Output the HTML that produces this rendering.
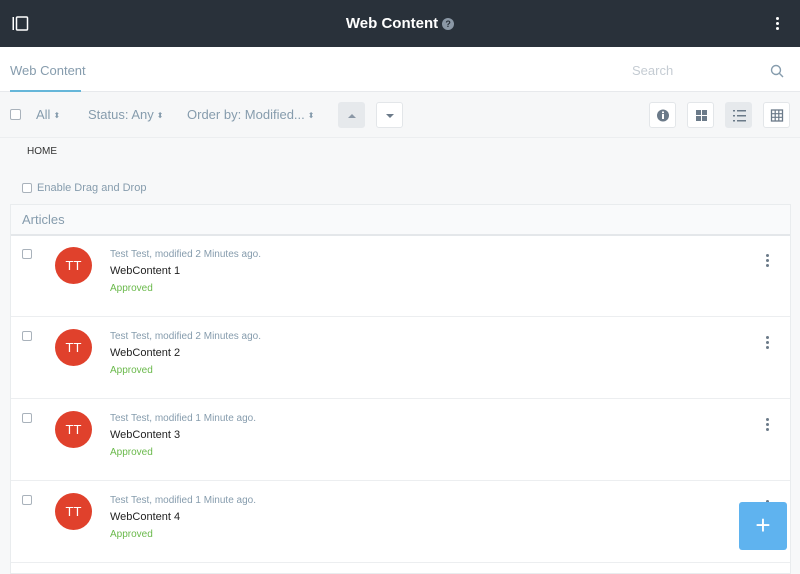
<!DOCTYPE html>
<html><head><style>
*{box-sizing:border-box;margin:0;padding:0}
body{width:800px;height:562px;overflow:hidden;background:#f7f8f9;font-family:"Liberation Sans",sans-serif;position:relative}
.top{position:absolute;left:0;top:0;width:800px;height:47px;background:#29313a}
.title{position:absolute;left:0;width:800px;top:15px;text-align:center;color:#fff;font-weight:bold;font-size:15px}
.q{display:inline-block;width:12px;height:12px;border-radius:50%;background:#8b98a6;color:#29313a;font-size:9px;line-height:12px;vertical-align:1px;margin-left:4px}
.nav{position:absolute;left:0;top:47px;width:800px;height:45px;background:#fff;border-bottom:1px solid #e7e9ec}
.tab{position:absolute;left:10px;top:16px;font-size:13px;color:#869cad}
.tabl{position:absolute;left:10px;top:43px;width:71px;height:2px;background:#65b6d9}
.srch{position:absolute;left:632px;top:16px;font-size:13px;color:#c5ccd3}
.mgmt{position:absolute;left:0;top:92px;width:800px;height:46px;background:#f6f7f8;border-bottom:1px solid #eceef0}
.cb{position:absolute;width:11px;height:11px;border:1px solid #a9b2bb;border-radius:2px;background:#fff}
.t{position:absolute;font-size:13px;color:#869cad}
.arr{font-size:8px;vertical-align:1px;margin-left:3px}
.btn{position:absolute;top:102px;width:27px;height:26px;border:1px solid #e3e6e9;border-radius:3px;background:#fff}
.panel{position:absolute;left:10px;top:204px;width:781px;height:370px;background:#fff;border:1px solid #e9ecee}
.hdr{height:31px;border-bottom:2px solid #e4e7ea;background:#f9fafb;font-size:13px;color:#869cad;padding:7px 11px}
.row{position:absolute;left:0;width:779px;height:82px;border-bottom:1px solid #eceef0}
.av{position:absolute;left:44px;top:12px;width:37px;height:37px;border-radius:50%;background:#e0412c;color:#fff;font-size:13px;text-align:center;line-height:37px}
.meta{position:absolute;left:99px;top:14px;font-size:10px;color:#869cad}
.nm{position:absolute;left:99px;top:30px;font-size:11px;color:#222}
.ap{position:absolute;left:99px;top:48px;font-size:10px;color:#6ab94b}
.kb{position:absolute;left:755px;top:19px;width:3px}
.kb i{display:block;width:3px;height:3px;border-radius:50%;background:#6b7a89;margin-bottom:2px}
.row .cb{left:11px;top:14px;width:10px;height:10px}
</style></head><body>
<div class="top">
<svg style="position:absolute;left:12px;top:16px" width="17" height="15"><rect x="0.5" y="1" width="1.5" height="13" fill="#fff"/><rect x="4.5" y="1" width="11" height="13" rx="1" fill="none" stroke="#fff" stroke-width="1.5"/></svg>
<div class="title">Web Content<span class="q">?</span></div>
<div style="position:absolute;left:776px;top:17px;width:3px"><i style="display:block;width:3px;height:3px;background:#fff;border-radius:50%;margin-bottom:2px"></i><i style="display:block;width:3px;height:3px;background:#fff;border-radius:50%;margin-bottom:2px"></i><i style="display:block;width:3px;height:3px;background:#fff;border-radius:50%"></i></div>
</div>
<div class="nav"><div class="tab">Web Content</div><div class="tabl"></div><div class="srch">Search</div>
<svg style="position:absolute;left:770px;top:17px" width="14" height="14"><circle cx="6" cy="6" r="4.5" fill="none" stroke="#869cad" stroke-width="1.4"/><line x1="9.3" y1="9.3" x2="13" y2="13" stroke="#869cad" stroke-width="1.4"/></svg></div>
<div class="mgmt">
<div class="cb" style="left:10px;top:17px"></div>
<div class="t" style="left:36px;top:15px">All<span class="arr">⬍</span></div>
<div class="t" style="left:88px;top:15px">Status: Any<span class="arr">⬍</span></div>
<div class="t" style="left:187px;top:15px">Order by: Modified...<span class="arr">⬍</span></div>
</div>
<div class="btn" style="left:338px;background:#e6e9ec;border-color:#e6e9ec"><svg width="27" height="26"><path d="M9 15 L13 11 L17 15Z" fill="#8b98a6"/></svg></div>
<div class="btn" style="left:376px"><svg width="27" height="26"><path d="M9 11 L13 15 L17 11Z" fill="#6b7a89"/></svg></div>
<div class="btn" style="left:649px"><svg width="27" height="26"><circle cx="13" cy="12.5" r="6" fill="#6b7a89"/><rect x="12" y="11" width="2" height="5" fill="#fff"/><rect x="12" y="8.5" width="2" height="1.6" fill="#fff"/></svg></div>
<div class="btn" style="left:687px"><svg width="27" height="26"><rect x="8" y="7" width="5" height="5" fill="#6b7a89"/><rect x="14" y="7" width="5" height="5" fill="#6b7a89"/><rect x="8" y="13" width="5" height="5" fill="#6b7a89"/><rect x="14" y="13" width="5" height="5" fill="#6b7a89"/></svg></div>
<div class="btn" style="left:725px;background:#e6e9ec;border-color:#e6e9ec"><svg width="27" height="26" fill="#6b7a89"><rect x="7" y="7" width="2" height="1.5"/><rect x="11" y="7" width="9" height="1.5"/><rect x="7" y="12" width="2" height="1.5"/><rect x="11" y="12" width="9" height="1.5"/><rect x="7" y="17" width="2" height="1.5"/><rect x="11" y="17" width="9" height="1.5"/></svg></div>
<div class="btn" style="left:763px"><svg width="27" height="26"><rect x="7.5" y="7" width="11" height="11" fill="none" stroke="#6b7a89" stroke-width="1.3"/><path d="M11.2 7v11M14.8 7v11M7.5 10.7h11M7.5 14.3h11" stroke="#6b7a89" stroke-width="1.2"/></svg></div>
<div style="position:absolute;left:27px;top:146px;font-size:10px;color:#333">HOME</div>
<div class="cb" style="left:22px;top:183px;width:10px;height:10px"></div>
<div class="t" style="left:37px;top:182px;font-size:11px">Enable Drag and Drop</div>
<div class="panel"><div class="hdr">Articles</div>
<div class="row" style="top:30px"><div class="cb"></div><div class="av">TT</div><div class="meta">Test Test, modified 2 Minutes ago.</div><div class="nm">WebContent 1</div><div class="ap">Approved</div><div class="kb"><i></i><i></i><i></i></div></div>
<div class="row" style="top:112px"><div class="cb"></div><div class="av">TT</div><div class="meta">Test Test, modified 2 Minutes ago.</div><div class="nm">WebContent 2</div><div class="ap">Approved</div><div class="kb"><i></i><i></i><i></i></div></div>
<div class="row" style="top:194px"><div class="cb"></div><div class="av">TT</div><div class="meta">Test Test, modified 1 Minute ago.</div><div class="nm">WebContent 3</div><div class="ap">Approved</div><div class="kb"><i></i><i></i><i></i></div></div>
<div class="row" style="top:276px"><div class="cb"></div><div class="av">TT</div><div class="meta">Test Test, modified 1 Minute ago.</div><div class="nm">WebContent 4</div><div class="ap">Approved</div><div class="kb"><i></i><i></i><i></i></div></div>
</div>
<div style="position:absolute;left:739px;top:502px;width:48px;height:48px;background:#5fb3ef;border-radius:3px;color:#fff;font-size:26px;text-align:center;line-height:46px">+</div>
</body></html>
